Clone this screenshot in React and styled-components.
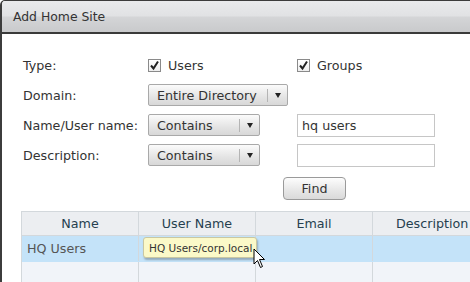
import React from "react";
import styled, { createGlobalStyle } from "styled-components";

const Global = createGlobalStyle`
  html, body {
    margin: 0;
    padding: 0;
    background: #ffffff;
    overflow: hidden;
  }
  body {
    font-family: "DejaVu Sans", Verdana, sans-serif;
    font-size: 12.7px;
    color: #333;
  }
`;

const Dialog = styled.div`
  width: 468px;
  height: 281px;
  border-left: 2px solid #3c3c3c;
  border-top: 1px solid #3c3c3c;
  border-top-left-radius: 5px;
  background: #fff;
  position: relative;
  overflow: hidden;
`;

const TitleBar = styled.div`
  height: 31px;
  display: flex;
  align-items: center;
  padding-left: 11px;
  background: linear-gradient(#e9eaec 0%, #e1e2e4 48%, #d4d5d7 52%, #c9cacc 100%);
  border-bottom: 2px solid #3a3a3a;
  font-size: 12.4px;
  color: #333;
`;

const Form = styled.div`
  display: grid;
  grid-template-columns: 125px 149px 160px;
  grid-auto-rows: 30px;
  align-items: center;
  padding: 16px 0 0 21px;
`;

const Label = styled.div`
  color: #333;
`;

const Check = styled.label`
  display: flex;
  align-items: center;
  gap: 7px;
`;

const Box = styled.span`
  width: 11px;
  height: 11px;
  border: 1px solid #8a8a8a;
  background: linear-gradient(#fff, #eee);
  display: flex;
  align-items: center;
  justify-content: center;
`;

const Select = styled.div`
  width: ${(p) => p.$w}px;
  height: 22px;
  box-sizing: border-box;
  border: 1px solid #a9a9a9;
  border-radius: 2px;
  background: linear-gradient(#fbfbfb, #e4e4e4 60%, #d8d8d8);
  display: flex;
  align-items: center;
`;

const SelectText = styled.span`
  flex: 1;
  padding-left: 8px;
  color: #333;
`;

const Arrow = styled.span`
  width: 19px;
  height: 13px;
  border-left: 1px solid #b4b4b4;
  display: flex;
  align-items: center;
  justify-content: center;
  &:after {
    content: "";
    border-left: 3.5px solid transparent;
    border-right: 3.5px solid transparent;
    border-top: 5px solid #222;
  }
`;

const Input = styled.div`
  width: 138px;
  height: 23px;
  box-sizing: border-box;
  border: 1px solid #c6c6c6;
  background: #fff;
  padding-left: 4px;
  display: flex;
  align-items: center;
  color: #333;
`;

const FindRow = styled.div`
  display: flex;
  padding: 7px 0 0 281px;
`;

const Button = styled.div`
  width: 63px;
  height: 23px;
  box-sizing: border-box;
  border: 1px solid #9a9a9a;
  border-radius: 4px;
  background: linear-gradient(#fdfdfd, #e6e6e6 60%, #dadada);
  display: flex;
  align-items: center;
  justify-content: center;
  color: #333;
`;

const Table = styled.div`
  margin: 11px 0 0 19px;
  border-top: 1px solid #d3d8dc;
  border-left: 1px solid #d3d8dc;
`;

const Row = styled.div`
  display: grid;
  grid-template-columns: 117px 117px 117px 1fr;
  height: ${(p) => p.$h}px;
  background: ${(p) => p.$bg};
  border-bottom: 1px solid ${(p) => (p.$head ? "#d3d8dc" : "transparent")};
`;

const Cell = styled.div`
  border-right: 1px solid #d3d8dc;
  display: flex;
  align-items: center;
  justify-content: ${(p) => (p.$center ? "center" : "flex-start")};
  padding-left: ${(p) => (p.$center ? 0 : 5)}px;
  color: ${(p) => (p.$head ? "#263f4f" : "#555")};
  white-space: nowrap;
  &:last-child {
    border-right: none;
    justify-content: flex-start;
    padding-left: ${(p) => (p.$center ? 23 : 5)}px;
  }
`;

const Tooltip = styled.div`
  position: absolute;
  left: 141px;
  top: 236px;
  height: 19px;
  padding: 0 4px 0 5px;
  display: flex;
  align-items: center;
  background: #fbf9c8;
  border: 1px solid #c9c7a2;
  border-radius: 3px;
  box-shadow: 1px 2px 2px rgba(0, 0, 0, 0.25);
  font-size: 10.5px;
  color: #333;
`;

const Cursor = styled.svg`
  position: absolute;
  left: 251px;
  top: 247px;
`;

const CheckMark = () => (
  <svg width="11" height="11" viewBox="0 0 11 11">
    <path d="M2 5.5 L4.5 8.5 L9 1.5" fill="none" stroke="#222" strokeWidth="2" />
  </svg>
);

export default function App() {
  return (
    <>
      <Global />
      <Dialog>
        <TitleBar>Add Home Site</TitleBar>
        <Form>
          <Label>Type:</Label>
          <Check>
            <Box>
              <CheckMark />
            </Box>
            Users
          </Check>
          <Check>
            <Box>
              <CheckMark />
            </Box>
            Groups
          </Check>

          <Label>Domain:</Label>
          <Select $w={140}>
            <SelectText>Entire Directory</SelectText>
            <Arrow />
          </Select>
          <div />

          <Label>Name/User name:</Label>
          <Select $w={112}>
            <SelectText>Contains</SelectText>
            <Arrow />
          </Select>
          <Input>hq users</Input>

          <Label>Description:</Label>
          <Select $w={112}>
            <SelectText>Contains</SelectText>
            <Arrow />
          </Select>
          <Input />
        </Form>
        <FindRow>
          <Button>Find</Button>
        </FindRow>
        <Table>
          <Row $h={23} $bg="#eceef1" $head>
            <Cell $center $head>Name</Cell>
            <Cell $center $head>User Name</Cell>
            <Cell $center $head>Email</Cell>
            <Cell $center $head>Description</Cell>
          </Row>
          <Row $h={25} $bg="#c4e3f9">
            <Cell>HQ Users</Cell>
            <Cell />
            <Cell />
            <Cell />
          </Row>
          <Row $h={30} $bg="#f1f4f9">
            <Cell />
            <Cell />
            <Cell />
            <Cell />
          </Row>
        </Table>
        <Tooltip>HQ Users/corp.local</Tooltip>
        <Cursor width="14" height="22" viewBox="0 0 14 22">
          <path
            d="M1 1 L1 16 L4.5 12.5 L7.5 19.5 L9.5 18.5 L6.5 11.5 L11.5 11.5 Z"
            fill="#fff"
            stroke="#000"
            strokeWidth="1"
            strokeLinejoin="miter"
          />
        </Cursor>
      </Dialog>
    </>
  );
}
